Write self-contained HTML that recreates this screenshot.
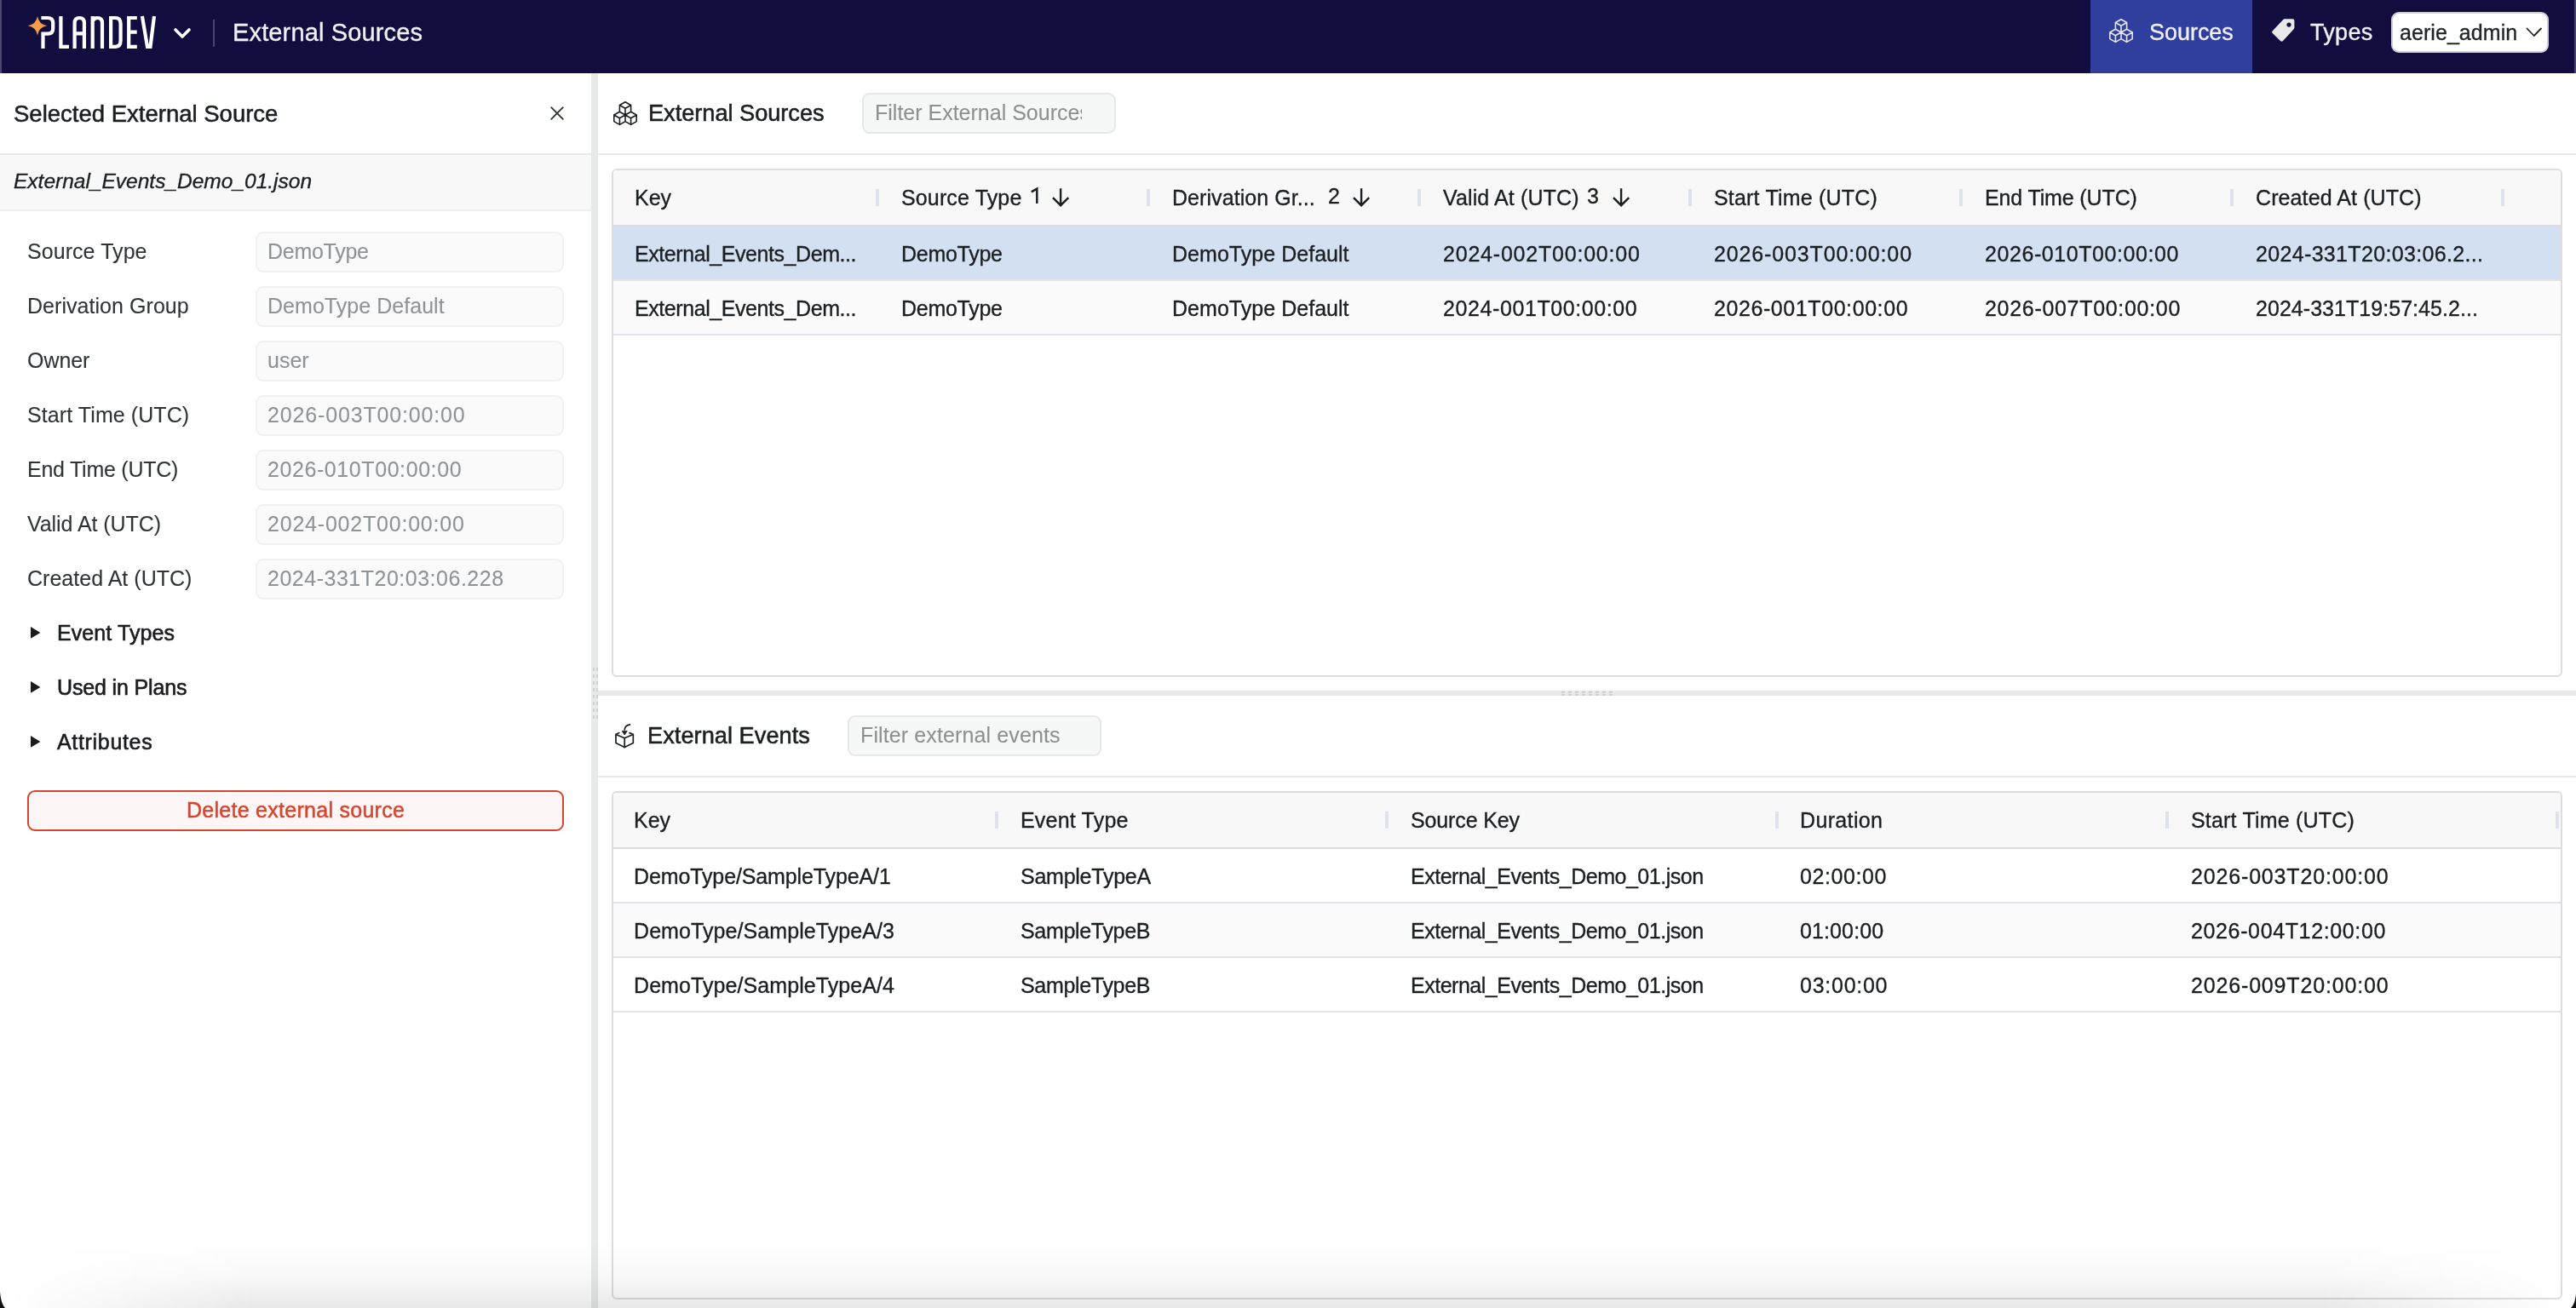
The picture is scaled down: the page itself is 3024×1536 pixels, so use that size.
<!DOCTYPE html>
<html><head><meta charset="utf-8">
<style>
html,body{margin:0;padding:0;}
body{width:3024px;height:1536px;overflow:hidden;position:relative;background:#fff;font-family:"Liberation Sans",sans-serif;color:#1b1f22;-webkit-font-smoothing:antialiased;}
@media (max-width:1700px){html{zoom:0.5;}}
.a{position:absolute;}
.t{position:absolute;white-space:nowrap;line-height:1;will-change:transform;-webkit-text-stroke:0.35px currentColor;}
</style></head>
<body>
<div class="a" style="left:0px;top:0px;width:3024px;height:86px;background:#110e3f;"></div>
<div class="a" style="left:0px;top:0px;width:2px;height:86px;background:#4b4870;"></div>
<div class="a" style="left:3022px;top:0px;width:2px;height:86px;background:#47446e;"></div>
<div class="a" style="left:2454px;top:0px;width:190px;height:86px;background:#303e9e;"></div>
<svg class="a" style="left:0;top:0" width="300" height="86" viewBox="0 0 300 86">
<path d="M44,19 Q45.6,28.6 55.2,30.2 Q45.6,31.8 44,41.4 Q42.4,31.8 32.7,30.2 Q42.4,28.6 44,19 Z" fill="#f49d48"/>
<g fill="none" stroke="#fff" stroke-width="4.2" stroke-linejoin="miter">
<path d="M48.4,21 H56 Q62.2,21 62.2,27.2 V33.4 Q62.2,39.6 56,39.6 H50.5 V56.9"/>
<path d="M71.4,19 V54.8 H81"/>
<path d="M87.6,56.9 V27 Q87.6,21 93.3,21 Q98.9,21 98.9,27 V56.9 M87.6,39.4 H98.9"/>
<path d="M108.7,56.9 V19 M108.7,25 Q110.5,21 114.3,21 Q120,21 120,27 V56.9"/>
<path d="M130.1,21 H135.5 Q141.6,21 141.6,28 V47.8 Q141.6,54.8 135.5,54.8 H130.1 Z"/>
<path d="M160.8,21 H151.2 V54.8 H160.8 M151.2,37.6 H160.7"/>
<path d="M166.9,19 L173,54.8 H176.5 L181,19"/>
</g>
<path d="M206,35 L214,43 L222,35" fill="none" stroke="#fff" stroke-width="3.6" stroke-linecap="round" stroke-linejoin="round"/>
<rect x="250" y="23" width="2" height="32" fill="#474470"/>
</svg>
<div class="t" style="left:272.6px;top:24.35px;font-size:29px;color:#f0f0f4;letter-spacing:0.147px;">External Sources</div>
<svg class="a" style="left:2476px;top:22px" width="29" height="29" viewBox="0 0 29 29"><path d="M14,0.7 L20.6,4.5 V12.2 L14,16 L7.4,12.2 V4.5 Z M7.4,4.5 L14,8.3 L20.6,4.5 M14,8.3 V16 M7.4,12.2 L14,16 V23.6 L7.4,27.4 L0.8,23.6 V16 Z M0.8,16 L7.4,19.8 L14,16 M7.4,19.8 V27.4 M20.6,12.2 L27.2,16 V23.6 L20.6,27.4 L14,23.6 V16 Z M14,16 L20.6,19.8 L27.2,16 M20.6,19.8 V27.4" fill="none" stroke="#e6e6f0" stroke-width="1.6" stroke-linejoin="round" stroke-linecap="round"/></svg>
<div class="t" style="left:2522.8px;top:25.14px;font-size:27px;color:#f0f0f4;letter-spacing:-0.033px;">Sources</div>
<svg class="a" style="left:2660px;top:18px" width="40" height="36" viewBox="0 0 40 36">
<path d="M21.8,4.3 H31.3 Q33.4,4.3 33.4,6.4 V14.3 Q33.4,15.4 32.6,16.2 L20,29.9 Q18.5,31.4 17,29.9 L7.8,21 Q6.4,19.6 7.8,18.2 L20.3,5 Q21,4.3 21.8,4.3 Z" fill="#e8e8ea"/>
<circle cx="27" cy="11.1" r="2.6" fill="#110e3f"/>
</svg>
<div class="t" style="left:2711.8px;top:25.14px;font-size:27px;color:#f0f0f4;letter-spacing:0.3px;">Types</div>
<div class="a" style="left:2807px;top:14px;width:185px;height:48px;background:#fff;border:2px solid #cfcfcf;border-radius:9px;box-sizing:border-box;"></div>
<div class="t" style="left:2816.8px;top:25.54px;font-size:25px;color:#1f2428;letter-spacing:0.06px;">aerie_admin</div>
<svg class="a" style="left:2960px;top:28px" width="30" height="20" viewBox="0 0 30 20">
<path d="M6.5,5.5 L14.7,14 L23,5.5" fill="none" stroke="#1f2428" stroke-width="1.8" stroke-linecap="round" stroke-linejoin="round"/>
</svg>
<div class="a" style="left:0px;top:180px;width:694px;height:2px;background:#e8ebea;"></div>
<div class="a" style="left:0px;top:182px;width:694px;height:64px;background:#f8f8f8;"></div>
<div class="a" style="left:0px;top:246px;width:694px;height:2px;background:#eceef1;"></div>
<div class="t" style="left:15.600000000000001px;top:119.72px;font-size:27.5px;letter-spacing:0.004px;-webkit-text-stroke:0.55px currentColor;">Selected External Source</div>
<svg class="a" style="left:640px;top:119px" width="28" height="28" viewBox="0 0 28 28">
<path d="M7.2,7.2 L20.8,20.8 M20.8,7.2 L7.2,20.8" fill="none" stroke="#2b3137" stroke-width="1.8" stroke-linecap="round"/>
</svg>
<div class="t" style="left:15.8px;top:201.06px;font-size:24.5px;letter-spacing:0.0px;font-style:italic;">External_Events_Demo_01.json</div>
<div class="t" style="left:31.6px;top:282.84px;font-size:25px;color:#303437;letter-spacing:0.06px;-webkit-text-stroke:0.1px currentColor;">Source Type</div>
<div class="a" style="left:300px;top:272px;width:362px;height:48px;background:#fafafa;border:2px solid #f1f1f1;border-radius:9px;box-sizing:border-box;"></div>
<div class="t" style="left:314.0px;top:282.84px;font-size:25px;color:#8f9396;letter-spacing:-0.271px;-webkit-text-stroke:0.1px currentColor;">DemoType</div>
<div class="t" style="left:31.6px;top:346.84px;font-size:25px;color:#303437;letter-spacing:0.047px;-webkit-text-stroke:0.1px currentColor;">Derivation Group</div>
<div class="a" style="left:300px;top:336px;width:362px;height:48px;background:#fafafa;border:2px solid #f1f1f1;border-radius:9px;box-sizing:border-box;"></div>
<div class="t" style="left:314.0px;top:346.84px;font-size:25px;color:#8f9396;letter-spacing:0.04px;-webkit-text-stroke:0.1px currentColor;">DemoType Default</div>
<div class="t" style="left:31.6px;top:410.84px;font-size:25px;color:#303437;letter-spacing:-0.05px;-webkit-text-stroke:0.1px currentColor;">Owner</div>
<div class="a" style="left:300px;top:400px;width:362px;height:48px;background:#fafafa;border:2px solid #f1f1f1;border-radius:9px;box-sizing:border-box;"></div>
<div class="t" style="left:314.0px;top:410.84px;font-size:25px;color:#8f9396;-webkit-text-stroke:0.1px currentColor;">user</div>
<div class="t" style="left:31.6px;top:474.84px;font-size:25px;color:#303437;letter-spacing:0.087px;-webkit-text-stroke:0.1px currentColor;">Start Time (UTC)</div>
<div class="a" style="left:300px;top:464px;width:362px;height:48px;background:#fafafa;border:2px solid #f1f1f1;border-radius:9px;box-sizing:border-box;"></div>
<div class="t" style="left:314.0px;top:474.84px;font-size:25px;color:#8f9396;letter-spacing:0.844px;-webkit-text-stroke:0.1px currentColor;">2026-003T00:00:00</div>
<div class="t" style="left:31.6px;top:538.84px;font-size:25px;color:#303437;letter-spacing:-0.246px;-webkit-text-stroke:0.1px currentColor;">End Time (UTC)</div>
<div class="a" style="left:300px;top:528px;width:362px;height:48px;background:#fafafa;border:2px solid #f1f1f1;border-radius:9px;box-sizing:border-box;"></div>
<div class="t" style="left:314.0px;top:538.84px;font-size:25px;color:#8f9396;letter-spacing:0.581px;-webkit-text-stroke:0.1px currentColor;">2026-010T00:00:00</div>
<div class="t" style="left:31.6px;top:602.84px;font-size:25px;color:#303437;letter-spacing:-0.062px;-webkit-text-stroke:0.1px currentColor;">Valid At (UTC)</div>
<div class="a" style="left:300px;top:592px;width:362px;height:48px;background:#fafafa;border:2px solid #f1f1f1;border-radius:9px;box-sizing:border-box;"></div>
<div class="t" style="left:314.0px;top:602.84px;font-size:25px;color:#8f9396;letter-spacing:0.788px;-webkit-text-stroke:0.1px currentColor;">2024-002T00:00:00</div>
<div class="t" style="left:31.6px;top:666.84px;font-size:25px;color:#303437;letter-spacing:0.02px;-webkit-text-stroke:0.1px currentColor;">Created At (UTC)</div>
<div class="a" style="left:300px;top:656px;width:362px;height:48px;background:#fafafa;border:2px solid #f1f1f1;border-radius:9px;box-sizing:border-box;"></div>
<div class="t" style="left:314.0px;top:666.84px;font-size:25px;color:#8f9396;letter-spacing:0.51px;-webkit-text-stroke:0.1px currentColor;">2024-331T20:03:06.228</div>
<svg class="a" style="left:30px;top:730px" width="24" height="26" viewBox="0 0 24 26"><path d="M6,6.1 L6,19.8 L17.4,12.9 Z" fill="#1b1c1e"/></svg>
<div class="t" style="left:66.9px;top:730.84px;font-size:25px;color:#1b1c1e;letter-spacing:0.09px;-webkit-text-stroke:0.6px currentColor;">Event Types</div>
<svg class="a" style="left:30px;top:794px" width="24" height="26" viewBox="0 0 24 26"><path d="M6,6.1 L6,19.8 L17.4,12.9 Z" fill="#1b1c1e"/></svg>
<div class="t" style="left:66.9px;top:794.84px;font-size:25px;color:#1b1c1e;letter-spacing:-0.142px;-webkit-text-stroke:0.6px currentColor;">Used in Plans</div>
<svg class="a" style="left:30px;top:858px" width="24" height="26" viewBox="0 0 24 26"><path d="M6,6.1 L6,19.8 L17.4,12.9 Z" fill="#1b1c1e"/></svg>
<div class="t" style="left:66.9px;top:858.84px;font-size:25px;color:#1b1c1e;letter-spacing:0.678px;-webkit-text-stroke:0.6px currentColor;">Attributes</div>
<div class="a" style="left:32px;top:928px;width:630px;height:48px;background:#fdf6f6;border:2px solid #d9442c;border-radius:9px;box-sizing:border-box;"></div>
<div class="t" style="left:218.6px;top:938.84px;font-size:25px;color:#d9442c;letter-spacing:0.271px;-webkit-text-stroke:0.5px currentColor;">Delete external source</div>
<div class="a" style="left:694px;top:86px;width:8px;height:1450px;background:#e8eaea;"></div>
<div class="a" style="left:702px;top:180px;width:2322px;height:2px;background:#e8ebea;"></div>
<svg class="a" style="left:720px;top:119px" width="29" height="29" viewBox="0 0 29 29"><path d="M14,0.7 L20.6,4.5 V12.2 L14,16 L7.4,12.2 V4.5 Z M7.4,4.5 L14,8.3 L20.6,4.5 M14,8.3 V16 M7.4,12.2 L14,16 V23.6 L7.4,27.4 L0.8,23.6 V16 Z M0.8,16 L7.4,19.8 L14,16 M7.4,19.8 V27.4 M20.6,12.2 L27.2,16 V23.6 L20.6,27.4 L14,23.6 V16 Z M14,16 L20.6,19.8 L27.2,16 M20.6,19.8 V27.4" fill="none" stroke="#1b1f22" stroke-width="1.6" stroke-linejoin="round" stroke-linecap="round"/></svg>
<div class="t" style="left:761.3px;top:119.18px;font-size:27.2px;letter-spacing:-0.027px;-webkit-text-stroke:0.55px currentColor;">External Sources</div>
<div class="a" style="left:1012px;top:109px;width:298px;height:48px;background:#f6f7f7;border:2px solid #e6e8e8;border-radius:9px;box-sizing:border-box;"></div>
<div class="a" style="left:1014px;top:111px;width:256px;height:44px;overflow:hidden;"><div class="t" style="left:12.6px;top:9.14px;font-size:25px;color:#8f8f8f;-webkit-text-stroke:0.1px currentColor;">Filter External Sources</div>
</div>
<div class="a" style="left:702px;top:911px;width:2322px;height:2px;background:#e8ebea;"></div>
<svg class="a" style="left:714px;top:842px" width="40" height="42" viewBox="0 0 40 42">
<g fill="none" stroke="#1b1f22" stroke-width="1.7" stroke-linejoin="round" stroke-linecap="round">
<path d="M12.8,18.6 L9,20.5 V30.6 L19.2,35.5 L29.3,30.5 V20.5 L25,18.6"/>
<path d="M9,20.5 L19.2,24.7 L29.3,20.5 M19.2,24.7 V35.5"/>
<path d="M25.5,8.9 Q19.5,9.8 19.2,15"/>
</g>
<path d="M16.2,16.4 H22.3 L19.2,21 Z" fill="#1b1f22" stroke="#1b1f22" stroke-width="0.8" stroke-linejoin="round"/>
</svg>
<div class="t" style="left:760.4px;top:850.18px;font-size:27.2px;letter-spacing:0.036px;-webkit-text-stroke:0.55px currentColor;">External Events</div>
<div class="a" style="left:995px;top:840px;width:298px;height:48px;background:#f6f7f7;border:2px solid #e6e8e8;border-radius:9px;box-sizing:border-box;"></div>
<div class="a" style="left:997px;top:842px;width:256px;height:44px;overflow:hidden;"><div class="t" style="left:12.6px;top:9.14px;font-size:25px;color:#8f8f8f;letter-spacing:0.119px;-webkit-text-stroke:0.1px currentColor;">Filter external events</div>
</div>
<div class="a" style="left:702px;top:811px;width:2322px;height:6px;background:#e8eaea;"></div>
<div class="a" style="left:718px;top:198px;width:2290px;height:597px;border:2px solid #dddddd;border-radius:6px;box-sizing:border-box;"></div>
<div class="a" style="left:720px;top:200px;width:2286px;height:64px;background:#f8f8f8;border-radius:4px 4px 0 0;"></div>
<div class="a" style="left:720px;top:264px;width:2286px;height:2px;background:#dcdcdc;"></div>
<div class="a" style="left:720px;top:266px;width:2286px;height:62px;background:#d2e0f1;"></div>
<div class="a" style="left:720px;top:328px;width:2286px;height:2px;background:#dfe4eb;"></div>
<div class="t" style="left:744.5px;top:286.24px;font-size:25px;letter-spacing:-0.429px;">External_Events_Dem...</div>
<div class="t" style="left:1058.2px;top:286.24px;font-size:25px;letter-spacing:-0.271px;">DemoType</div>
<div class="t" style="left:1375.9px;top:286.24px;font-size:25px;letter-spacing:0.033px;">DemoType Default</div>
<div class="t" style="left:1693.8px;top:286.24px;font-size:25px;letter-spacing:0.788px;">2024-002T00:00:00</div>
<div class="t" style="left:2012.0px;top:286.24px;font-size:25px;letter-spacing:0.863px;">2026-003T00:00:00</div>
<div class="t" style="left:2329.9px;top:286.24px;font-size:25px;letter-spacing:0.569px;">2026-010T00:00:00</div>
<div class="t" style="left:2648.0px;top:286.24px;font-size:25px;letter-spacing:0.338px;">2024-331T20:03:06.2...</div>
<div class="a" style="left:720px;top:330px;width:2286px;height:62px;background:#fbfbfb;"></div>
<div class="a" style="left:720px;top:392px;width:2286px;height:2px;background:#dfe4eb;"></div>
<div class="t" style="left:744.5px;top:350.24px;font-size:25px;letter-spacing:-0.429px;">External_Events_Dem...</div>
<div class="t" style="left:1058.2px;top:350.24px;font-size:25px;letter-spacing:-0.271px;">DemoType</div>
<div class="t" style="left:1375.9px;top:350.24px;font-size:25px;letter-spacing:0.033px;">DemoType Default</div>
<div class="t" style="left:1693.8px;top:350.24px;font-size:25px;letter-spacing:0.594px;">2024-001T00:00:00</div>
<div class="t" style="left:2012.0px;top:350.24px;font-size:25px;letter-spacing:0.581px;">2026-001T00:00:00</div>
<div class="t" style="left:2329.9px;top:350.24px;font-size:25px;letter-spacing:0.694px;">2026-007T00:00:00</div>
<div class="t" style="left:2648.0px;top:350.24px;font-size:25px;letter-spacing:0.043px;">2024-331T19:57:45.2...</div>
<div class="a" style="left:1028px;top:222px;width:4px;height:20px;background:#dde2ed;"></div>
<div class="a" style="left:1346px;top:222px;width:4px;height:20px;background:#dde2ed;"></div>
<div class="a" style="left:1664px;top:222px;width:4px;height:20px;background:#dde2ed;"></div>
<div class="a" style="left:1982px;top:222px;width:4px;height:20px;background:#dde2ed;"></div>
<div class="a" style="left:2300px;top:222px;width:4px;height:20px;background:#dde2ed;"></div>
<div class="a" style="left:2618px;top:222px;width:4px;height:20px;background:#dde2ed;"></div>
<div class="a" style="left:2936px;top:222px;width:4px;height:20px;background:#dde2ed;"></div>
<div class="t" style="left:744.5px;top:219.74px;font-size:25px;">Key</div>
<div class="t" style="left:1058.2px;top:219.74px;font-size:25px;letter-spacing:0.14px;">Source Type</div>
<div class="t" style="left:1375.9px;top:219.74px;font-size:25px;letter-spacing:0.067px;">Derivation Gr...</div>
<div class="t" style="left:1693.8px;top:219.74px;font-size:25px;letter-spacing:0.123px;">Valid At (UTC)</div>
<div class="t" style="left:2012.0px;top:219.74px;font-size:25px;letter-spacing:0.193px;">Start Time (UTC)</div>
<div class="t" style="left:2329.9px;top:219.74px;font-size:25px;letter-spacing:-0.131px;">End Time (UTC)</div>
<div class="t" style="left:2648.0px;top:219.74px;font-size:25px;letter-spacing:0.1px;">Created At (UTC)</div>
<svg class="a" style="left:1232.8px;top:219px" width="26" height="26" viewBox="0 0 26 26"><path d="M12.1,2.2 V22.4 M3,13.1 L12.1,22.2 L21.2,13.1" fill="none" stroke="#1b1f22" stroke-width="2.4" stroke-linecap="butt" stroke-linejoin="miter"/></svg>
<div class="t" style="left:1559.4px;top:217.94px;font-size:25px;">2</div>
<svg class="a" style="left:1585.9px;top:219px" width="26" height="26" viewBox="0 0 26 26"><path d="M12.1,2.2 V22.4 M3,13.1 L12.1,22.2 L21.2,13.1" fill="none" stroke="#1b1f22" stroke-width="2.4" stroke-linecap="butt" stroke-linejoin="miter"/></svg>
<div class="t" style="left:1863.4px;top:217.94px;font-size:25px;">3</div>
<svg class="a" style="left:1891.2px;top:219px" width="26" height="26" viewBox="0 0 26 26"><path d="M12.1,2.2 V22.4 M3,13.1 L12.1,22.2 L21.2,13.1" fill="none" stroke="#1b1f22" stroke-width="2.4" stroke-linecap="butt" stroke-linejoin="miter"/></svg>
<svg class="a" style="left:1200px;top:215px" width="30" height="30" viewBox="1200 215 30 30"><path d="M1210.8,225.4 L1217.3,221.6 V239.1" fill="none" stroke="#1b1f22" stroke-width="2.5" stroke-linejoin="miter"/></svg>
<div class="a" style="left:718px;top:929px;width:2290px;height:597px;border:2px solid #dddddd;border-radius:6px;box-sizing:border-box;"></div>
<div class="a" style="left:720px;top:931px;width:2286px;height:64px;background:#f8f8f8;border-radius:4px 4px 0 0;"></div>
<div class="a" style="left:720px;top:995px;width:2286px;height:2px;background:#dcdcdc;"></div>
<div class="a" style="left:720px;top:997px;width:2286px;height:62px;background:#ffffff;"></div>
<div class="a" style="left:720px;top:1059px;width:2286px;height:2px;background:#dfe4eb;"></div>
<div class="t" style="left:744.0px;top:1017.24px;font-size:25px;letter-spacing:-0.119px;">DemoType/SampleTypeA/1</div>
<div class="t" style="left:1197.6px;top:1017.24px;font-size:25px;letter-spacing:-0.25px;">SampleTypeA</div>
<div class="t" style="left:1655.5px;top:1017.24px;font-size:25px;letter-spacing:-0.485px;">External_Events_Demo_01.json</div>
<div class="t" style="left:2113.3px;top:1017.24px;font-size:25px;letter-spacing:0.586px;">02:00:00</div>
<div class="t" style="left:2571.7px;top:1017.24px;font-size:25px;letter-spacing:0.838px;">2026-003T20:00:00</div>
<div class="a" style="left:720px;top:1061px;width:2286px;height:62px;background:#fbfbfb;"></div>
<div class="a" style="left:720px;top:1123px;width:2286px;height:2px;background:#dfe4eb;"></div>
<div class="t" style="left:744.0px;top:1081.24px;font-size:25px;letter-spacing:0.081px;">DemoType/SampleTypeA/3</div>
<div class="t" style="left:1197.6px;top:1081.24px;font-size:25px;letter-spacing:-0.32px;">SampleTypeB</div>
<div class="t" style="left:1655.5px;top:1081.24px;font-size:25px;letter-spacing:-0.485px;">External_Events_Demo_01.json</div>
<div class="t" style="left:2113.3px;top:1081.24px;font-size:25px;letter-spacing:0.114px;">01:00:00</div>
<div class="t" style="left:2571.7px;top:1081.24px;font-size:25px;letter-spacing:0.631px;">2026-004T12:00:00</div>
<div class="a" style="left:720px;top:1125px;width:2286px;height:62px;background:#ffffff;"></div>
<div class="a" style="left:720px;top:1187px;width:2286px;height:2px;background:#dfe4eb;"></div>
<div class="t" style="left:744.0px;top:1145.24px;font-size:25px;letter-spacing:0.081px;">DemoType/SampleTypeA/4</div>
<div class="t" style="left:1197.6px;top:1145.24px;font-size:25px;letter-spacing:-0.32px;">SampleTypeB</div>
<div class="t" style="left:1655.5px;top:1145.24px;font-size:25px;letter-spacing:-0.485px;">External_Events_Demo_01.json</div>
<div class="t" style="left:2113.3px;top:1145.24px;font-size:25px;letter-spacing:0.743px;">03:00:00</div>
<div class="t" style="left:2571.7px;top:1145.24px;font-size:25px;letter-spacing:0.838px;">2026-009T20:00:00</div>
<div class="a" style="left:1168px;top:953px;width:4px;height:20px;background:#dde2ed;"></div>
<div class="a" style="left:1626px;top:953px;width:4px;height:20px;background:#dde2ed;"></div>
<div class="a" style="left:2084px;top:953px;width:4px;height:20px;background:#dde2ed;"></div>
<div class="a" style="left:2542px;top:953px;width:4px;height:20px;background:#dde2ed;"></div>
<div class="a" style="left:3000px;top:953px;width:4px;height:20px;background:#dde2ed;"></div>
<div class="t" style="left:744.0px;top:950.74px;font-size:25px;">Key</div>
<div class="t" style="left:1197.6px;top:950.74px;font-size:25px;letter-spacing:0.2px;">Event Type</div>
<div class="t" style="left:1655.5px;top:950.74px;font-size:25px;letter-spacing:-0.133px;">Source Key</div>
<div class="t" style="left:2113.3px;top:950.74px;font-size:25px;letter-spacing:0.357px;">Duration</div>
<div class="t" style="left:2571.7px;top:950.74px;font-size:25px;letter-spacing:0.193px;">Start Time (UTC)</div>
<div class="a" style="left:696px;top:784px;width:2px;height:4px;background:#cfd0d0;"></div>
<div class="a" style="left:700px;top:784px;width:2px;height:4px;background:#cfd0d0;"></div>
<div class="a" style="left:1833px;top:812px;width:4px;height:2px;background:#cfd0d0;"></div>
<div class="a" style="left:1833px;top:815px;width:4px;height:2px;background:#cfd0d0;"></div>
<div class="a" style="left:696px;top:792px;width:2px;height:4px;background:#cfd0d0;"></div>
<div class="a" style="left:700px;top:792px;width:2px;height:4px;background:#cfd0d0;"></div>
<div class="a" style="left:1841px;top:812px;width:4px;height:2px;background:#cfd0d0;"></div>
<div class="a" style="left:1841px;top:815px;width:4px;height:2px;background:#cfd0d0;"></div>
<div class="a" style="left:696px;top:800px;width:2px;height:4px;background:#cfd0d0;"></div>
<div class="a" style="left:700px;top:800px;width:2px;height:4px;background:#cfd0d0;"></div>
<div class="a" style="left:1849px;top:812px;width:4px;height:2px;background:#cfd0d0;"></div>
<div class="a" style="left:1849px;top:815px;width:4px;height:2px;background:#cfd0d0;"></div>
<div class="a" style="left:696px;top:808px;width:2px;height:4px;background:#cfd0d0;"></div>
<div class="a" style="left:700px;top:808px;width:2px;height:4px;background:#cfd0d0;"></div>
<div class="a" style="left:1857px;top:812px;width:4px;height:2px;background:#cfd0d0;"></div>
<div class="a" style="left:1857px;top:815px;width:4px;height:2px;background:#cfd0d0;"></div>
<div class="a" style="left:696px;top:816px;width:2px;height:4px;background:#cfd0d0;"></div>
<div class="a" style="left:700px;top:816px;width:2px;height:4px;background:#cfd0d0;"></div>
<div class="a" style="left:1865px;top:812px;width:4px;height:2px;background:#cfd0d0;"></div>
<div class="a" style="left:1865px;top:815px;width:4px;height:2px;background:#cfd0d0;"></div>
<div class="a" style="left:696px;top:824px;width:2px;height:4px;background:#cfd0d0;"></div>
<div class="a" style="left:700px;top:824px;width:2px;height:4px;background:#cfd0d0;"></div>
<div class="a" style="left:1873px;top:812px;width:4px;height:2px;background:#cfd0d0;"></div>
<div class="a" style="left:1873px;top:815px;width:4px;height:2px;background:#cfd0d0;"></div>
<div class="a" style="left:696px;top:832px;width:2px;height:4px;background:#cfd0d0;"></div>
<div class="a" style="left:700px;top:832px;width:2px;height:4px;background:#cfd0d0;"></div>
<div class="a" style="left:1881px;top:812px;width:4px;height:2px;background:#cfd0d0;"></div>
<div class="a" style="left:1881px;top:815px;width:4px;height:2px;background:#cfd0d0;"></div>
<div class="a" style="left:696px;top:840px;width:2px;height:4px;background:#cfd0d0;"></div>
<div class="a" style="left:700px;top:840px;width:2px;height:4px;background:#cfd0d0;"></div>
<div class="a" style="left:1889px;top:812px;width:4px;height:2px;background:#cfd0d0;"></div>
<div class="a" style="left:1889px;top:815px;width:4px;height:2px;background:#cfd0d0;"></div>
<div class="a" style="left:0;top:1456px;width:3024px;height:80px;background:linear-gradient(to bottom,rgba(0,0,0,0) 0%,rgba(0,0,0,0.025) 50%,rgba(0,0,0,0.09) 100%);-webkit-mask-image:linear-gradient(to right,transparent 10px,#000 300px,#000 2724px,transparent 3014px);"></div>
<svg class="a" style="left:0;top:1500px" width="12" height="36" viewBox="0 0 12 36"><path d="M0,17 Q1.2,31 6,36 H0 Z" fill="#141012"/></svg>
<svg class="a" style="left:3012px;top:1500px" width="12" height="36" viewBox="0 0 12 36"><path d="M12,19 Q11,31 6,36 H12 Z" fill="#141012"/></svg>
</body></html>
